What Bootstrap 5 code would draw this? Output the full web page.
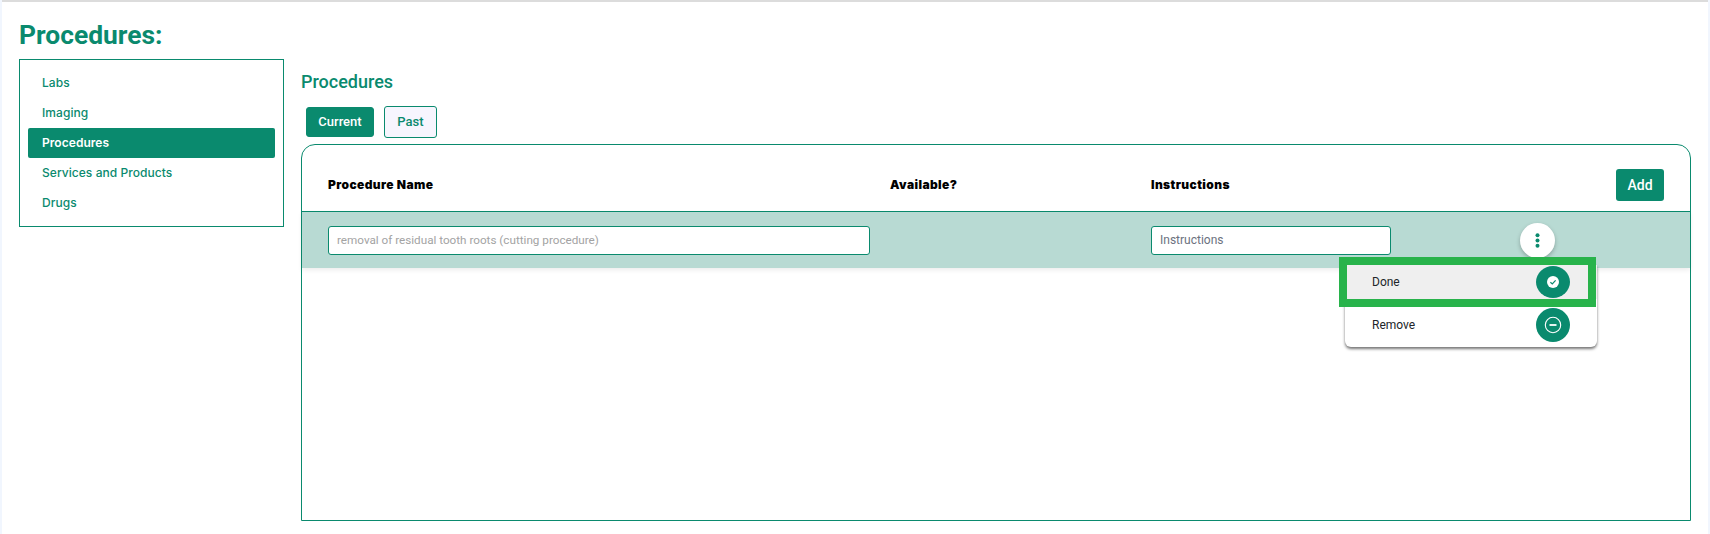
<!DOCTYPE html>
<html lang="en">
<head>
<meta charset="utf-8">
<title>Procedures</title>
<link rel="stylesheet" href="https://cdn.jsdelivr.net/npm/bootstrap@5.3.0/dist/css/bootstrap.min.css">
<style>
html,body{height:534px;overflow:hidden}
body{background:#f1f6fe;font-family:Roboto,sans-serif;padding:0 2px}
.sheet{height:534px;background:#fff;border-top:2px solid #dcdcdc;padding:15px 17px 0 17px}
.page-title{font-size:26.4px;font-weight:700;color:#0a8a6e;line-height:36px;margin:0 0 6px}
.side-box{width:265px;height:168px;border:1px solid #0a8a6e;padding:8px;flex:none}
.side-link{display:block;height:30px;line-height:30px;padding-left:14px;border-radius:2px;font-family:Inter,sans-serif;font-size:12px;font-weight:500;letter-spacing:.05px;color:#0a8a6e;text-decoration:none}
.side-link.on{background:#0a8a6e;color:#fff;font-weight:600}
.main-col{margin-left:17px;min-width:0}
.sub-title{font-size:18px;font-weight:500;color:#0a8a6e;line-height:24px;margin:11px 0 12px}
.tab-row{padding-left:5px;gap:10px;height:32px;margin-bottom:6px}
.tab-btn{font-size:13px;font-weight:500;border-radius:3px;padding:0;line-height:28px}
.tab-on{width:68px;height:30px;background:#0a8a6e;color:#fff;border:1px solid #0a8a6e}
.tab-off{width:53px;height:32px;background:#f7f5fe;color:#0a8a6e;border:1px solid #0a8a6e}
.proc-box{height:377px;border:1px solid #0a8a6e;border-radius:14px 14px 0 0;position:relative}
.head-row{height:67px;border-bottom:1px solid #0a8a6e;padding:14px 26px 0 26px}
.col-a{width:562px;flex:none}
.col-b{width:261px;flex:none}
.col-c{flex:1}
.head-text{font-family:Inter,sans-serif;font-size:12px;font-weight:900;letter-spacing:.4px;color:#000}
.add-btn{width:48px;height:32px;background:#0a8a6e;color:#fff;border:0;border-radius:3px;font-size:14px;font-weight:500;padding:0}
.data-row{height:56px;background:#b8dad3;padding:1px 26px 0 26px;box-shadow:0 2px 5px rgba(0,0,0,.08)}
.fake-input{height:29px;border:1px solid #0a8a6e;border-radius:3px;background:#fff;font-size:12px;padding:0 8px 2px;box-shadow:none;color:#495057}
.fake-input::placeholder{color:#a3a3a3;opacity:1}
.input-a{width:542px;font-size:11.7px}
.input-c{width:240px}
.input-c::placeholder{color:#6c7280}
.kebab{position:absolute;left:1218px;top:78px;width:35px;height:35px;border-radius:50%;background:#fff;border:0;padding:0;box-shadow:0 2px 4px rgba(0,0,0,.25)}
.action-menu{position:absolute;left:1043px;top:120px;width:252px;height:82px;background:#fff;border-radius:0 0 6px 6px;box-shadow:0 2px 3px rgba(0,0,0,.55)}
.action-item{padding:0 27px;font-size:12px;color:#212529}
.action-item.first{background:#efefef;height:34px}
.action-item.second{height:44px;margin-top:4px}
.round-ico{width:34px;height:34px;border-radius:50%;background:#0a8a6e;flex:none}
.first .round-ico{height:32px}
.green-mark{position:absolute;left:-6px;top:-8px;width:257px;height:50px;border:8px solid #28b34b;pointer-events:none}
</style>
</head>
<body>
<div class="sheet">
  <h1 class="page-title">Procedures:</h1>
  <div class="d-flex">
    <nav class="side-box">
      <a class="side-link" href="#">Labs</a>
      <a class="side-link" href="#">Imaging</a>
      <a class="side-link on" href="#">Procedures</a>
      <a class="side-link" href="#">Services and Products</a>
      <a class="side-link" href="#">Drugs</a>
    </nav>
    <div class="main-col flex-grow-1">
      <h2 class="sub-title">Procedures</h2>
      <div class="tab-row d-flex align-items-center">
        <button class="btn tab-btn tab-on" type="button">Current</button>
        <button class="btn tab-btn tab-off" type="button">Past</button>
      </div>
      <div class="proc-box">
        <div class="head-row d-flex align-items-center">
          <div class="col-a head-text">Procedure Name</div>
          <div class="col-b head-text">Available?</div>
          <div class="col-c head-text">Instructions</div>
          <button class="btn add-btn" type="button">Add</button>
        </div>
        <div class="data-row d-flex align-items-center">
          <div class="col-a"><input class="form-control fake-input input-a" placeholder="removal of residual tooth roots (cutting procedure)"></div>
          <div class="col-b"></div>
          <div class="col-c"><input class="form-control fake-input input-c" placeholder="Instructions"></div>
        </div>
        <button class="kebab d-flex align-items-center justify-content-center" type="button" aria-label="More">
          <svg width="5" height="15" viewBox="0 0 5 15"><g fill="#0a8a6e"><circle cx="2.5" cy="2.3" r="2"/><circle cx="2.5" cy="7.5" r="2"/><circle cx="2.5" cy="12.7" r="2"/></g></svg>
        </button>
        <div class="action-menu">
          <div class="action-item first d-flex align-items-center justify-content-between">
            <span>Done</span>
            <span class="round-ico d-flex align-items-center justify-content-center">
              <svg width="14" height="14" viewBox="0 0 14 14"><circle cx="7" cy="7" r="6" fill="#fff"/><path d="M4.4 7.2 6.3 9l3.3-3.6" fill="none" stroke="#0a8a6e" stroke-width="1.2"/></svg>
            </span>
          </div>
          <div class="action-item second d-flex align-items-center justify-content-between">
            <span>Remove</span>
            <span class="round-ico d-flex align-items-center justify-content-center">
              <svg width="18" height="18" viewBox="0 0 18 18"><circle cx="9" cy="9" r="7.7" fill="none" stroke="#fff" stroke-width="1.1"/><path d="M5.5 9h7" stroke="#fff" stroke-width="1.8"/></svg>
            </span>
          </div>
          <div class="green-mark"></div>
        </div>
      </div>
    </div>
  </div>
</div>
<script src="https://cdn.jsdelivr.net/npm/bootstrap@5.3.0/dist/js/bootstrap.bundle.min.js"></script>
</body>
</html>
